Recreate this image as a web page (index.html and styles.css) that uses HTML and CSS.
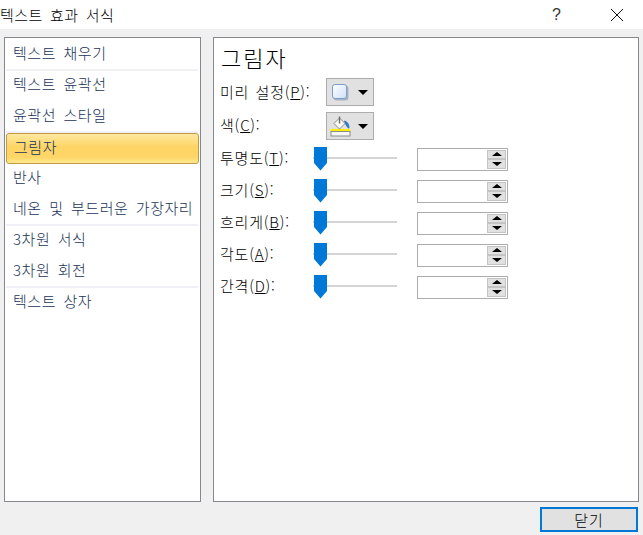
FILE: index.html
```html
<!DOCTYPE html>
<html lang="ko">
<head>
<meta charset="utf-8">
<title>텍스트 효과 서식</title>
<link rel="stylesheet" href="styles.css">
</head>
<body>
<div class="dialog">
  <header class="titlebar">
    <span class="title">텍스트 효과 서식</span>
    <span class="help">?</span>
    <svg class="close" width="14" height="14" viewBox="0 0 14 14"><path d="M1 1 13 13M13 1 1 13" stroke="#111" stroke-width="1" fill="none"/></svg>
  </header>
  <main class="main">
    <nav class="sidebar">
      <div class="item">텍스트 채우기</div>
      <div class="sep"></div>
      <div class="item">텍스트 윤곽선</div>
      <div class="item">윤곽선 스타일</div>
      <div class="sep faint"></div>
      <div class="item selected">그림자</div>
      <div class="item">반사</div>
      <div class="item">네온 및 부드러운 가장자리</div>
      <div class="sep"></div>
      <div class="item">3차원 서식</div>
      <div class="item">3차원 회전</div>
      <div class="sep"></div>
      <div class="item">텍스트 상자</div>
    </nav>
    <section class="panel">
      <h1 class="heading">그림자</h1>
      <div class="row btn-row">
        <span class="label">미리 설정(<u>P</u>):</span>
        <div class="dropdown">
          <svg width="20" height="20" viewBox="0 0 20 20">
            <defs>
              <linearGradient id="sq" x1="0" y1="0" x2="1" y2="1"><stop offset="0" stop-color="#ffffff"/><stop offset="1" stop-color="#cfe0f7"/></linearGradient>
            </defs>
            <rect x="3.500" y="3.500" width="15" height="15" rx="3" fill="#a9b3c4"/>
            <rect x="2.500" y="2.500" width="14" height="14" rx="2.500" fill="url(#sq)" stroke="#7a9dd0"/>
          </svg>
          <span class="caret"></span>
        </div>
      </div>
      <div class="row btn-row second">
        <span class="label">색(<u>C</u>):</span>
        <div class="dropdown">
          <svg width="22" height="22" viewBox="0 0 22 22">
            <path d="M4 8.500 9.500 3l5.500 5.500-5.500 5.500z" fill="#fbfaf2" stroke="#8a8a8a"/>
            <path d="M9.500 1.500v7" stroke="#6b6b6b" stroke-width="1.400"/>
            <path d="M14 5.500c3 .5 5.500 3 5.500 7.500l-1.500.5-3-4.500z" fill="#3a7ac2"/>
            <rect x="0.500" y="14" width="20" height="2" fill="#ffee00"/>
            <rect x="1" y="16.500" width="19" height="4.500" fill="#f6f6f6" stroke="#8c8c8c"/>
          </svg>
          <span class="caret"></span>
        </div>
      </div>
      <div class="row slider-row">
        <span class="label narrow">투명도(<u>T</u>):</span>
        <div class="slider"><svg class="thumb" width="14" height="24" viewBox="0 0 14 24"><path d="M1 0h13v16L7.500 23.500 1 16z" fill="#0078d7"/></svg></div>
        <div class="spinner"><div class="spins"><span class="spin"><i class="up"></i></span><span class="spin"><i class="down"></i></span></div></div>
      </div>
      <div class="row slider-row">
        <span class="label narrow">크기(<u>S</u>):</span>
        <div class="slider"><svg class="thumb" width="14" height="24" viewBox="0 0 14 24"><path d="M1 0h13v16L7.500 23.500 1 16z" fill="#0078d7"/></svg></div>
        <div class="spinner"><div class="spins"><span class="spin"><i class="up"></i></span><span class="spin"><i class="down"></i></span></div></div>
      </div>
      <div class="row slider-row">
        <span class="label narrow">흐리게(<u>B</u>):</span>
        <div class="slider"><svg class="thumb" width="14" height="24" viewBox="0 0 14 24"><path d="M1 0h13v16L7.500 23.500 1 16z" fill="#0078d7"/></svg></div>
        <div class="spinner"><div class="spins"><span class="spin"><i class="up"></i></span><span class="spin"><i class="down"></i></span></div></div>
      </div>
      <div class="row slider-row">
        <span class="label narrow">각도(<u>A</u>):</span>
        <div class="slider"><svg class="thumb" width="14" height="24" viewBox="0 0 14 24"><path d="M1 0h13v16L7.500 23.500 1 16z" fill="#0078d7"/></svg></div>
        <div class="spinner"><div class="spins"><span class="spin"><i class="up"></i></span><span class="spin"><i class="down"></i></span></div></div>
      </div>
      <div class="row slider-row">
        <span class="label narrow">간격(<u>D</u>):</span>
        <div class="slider"><svg class="thumb" width="14" height="24" viewBox="0 0 14 24"><path d="M1 0h13v16L7.500 23.500 1 16z" fill="#0078d7"/></svg></div>
        <div class="spinner"><div class="spins"><span class="spin"><i class="up"></i></span><span class="spin"><i class="down"></i></span></div></div>
      </div>
    </section>
  </main>
  <footer class="footer"><button class="close-btn">닫기</button></footer>
</div>
</body>
</html>
```
FILE: styles.css
```css
* { box-sizing: border-box; }
html, body { margin: 0; padding: 0; }
body {
  width: 643px;
  height: 535px;
  overflow: hidden;
  background: #f0f0f0;
  font-family: "Noto Sans CJK KR", "Liberation Sans", sans-serif;
  font-size: 15px;
  font-weight: 300;
  color: #000;
}
.dialog { display: flex; flex-direction: column; height: 535px; }
.titlebar {
  height: 29px;
  flex: none;
  background: #fff;
  display: flex;
  align-items: center;
  padding-left: 0;
}
.title { font-size: 15px; letter-spacing: 0.5px; word-spacing: 2.4px; line-height: 25px; flex: 1; }
.help { font-family: "Liberation Sans", sans-serif; font-size: 16px; font-weight: 400; width: 14px; margin-right: 44px; color: #333; }
.close { margin-right: 19px; }
.main {
  flex: none;
  height: 473px;
  padding: 8px 4px 0 4px;
  display: flex;
  gap: 12px;
}
.sidebar {
  width: 197px;
  height: 465px;
  background: #fff;
  border: 1px solid #87878f;
  padding: 1px 1px 1px 0;
  color: #1a3358;
}
.item {
  height: 31px;
  line-height: 28px;
  padding-left: 8px;
  letter-spacing: 0.55px;
  word-spacing: 2.7px;
  white-space: nowrap;
}
.sep { height: 2px; margin: -1px 1px; background: #f1f0f6; position: relative; }
.sep.faint { margin: -1px 1px -1px; }
.selected {
  height: 31px;
  margin: 1px 0 -1px 1px;
  padding-left: 7px;
  width: 193px;
  border: 1px solid #c29a43;
  border-radius: 3px;
  background: linear-gradient(#fde8a0 0, #fed565 45%, #fdd668 80%, #ffe88e 100%);
  line-height: 26px;
}
.panel {
  width: 426px;
  height: 465px;
  background: #fff;
  border: 1px solid #87878f;
  padding: 5px 0 0 6px;
}
.heading {
  margin: 0;
  font-size: 22px;
  font-weight: 300;
  line-height: 29px;
  height: 30px;
  letter-spacing: 2px;
  padding-left: 1px;
}
.row { display: flex; align-items: center; }
.label { letter-spacing: 0.8px; word-spacing: 1.4px; white-space: nowrap; line-height: 24px; }
.btn-row { height: 28px; margin-top: 5px; justify-content: flex-start; position: relative; }
.btn-row .label { width: 106px; flex: none; }
.btn-row.second { margin-top: 6px; }
.btn-row.second .label { margin-bottom: 2px; }
.dropdown {
  width: 48px;
  height: 28px;
  background: #e1e1e1;
  border: 1px solid #adadad;
  display: flex;
  align-items: center;
  padding-left: 3px;
  gap: 8px;
}
.btn-row.second .dropdown { gap: 6px; }
.caret {
  width: 0;
  height: 0;
  border-left: 5px solid transparent;
  border-right: 5px solid transparent;
  border-top: 5px solid #000;
}
.slider-row { height: 24px; margin-top: 8px; }
.btn-row.second + .slider-row { margin-top: 7px; }
.narrow { width: 93px; flex: none; margin-bottom: 2px; }
.slider { width: 84px; height: 24px; position: relative; flex: none; }
.slider::before {
  content: "";
  display: block;
  position: absolute;
  left: 0;
  right: 0;
  top: 10px;
  height: 2px;
  background: #d4d4d4;
}
.thumb { position: absolute; left: 0; top: 0; }
.spinner {
  margin-left: 20px;
  width: 91px;
  height: 23px;
  border: 1px solid #adadad;
  background: #fff;
  display: flex;
  justify-content: flex-end;
  padding: 1px;
  flex: none;
}
.spins { width: 19px; display: flex; flex-direction: column; }
.spin {
  flex: 1;
  background: #e1e1e1;
  border: 1px solid #c4c4c4;
  display: flex;
  align-items: center;
  justify-content: center;
}
.up, .down { display: block; width: 0; height: 0; border-left: 5px solid transparent; border-right: 5px solid transparent; }
.up { border-bottom: 4px solid #000; }
.down { border-top: 4px solid #000; }
.footer { flex: 1; display: flex; justify-content: flex-end; padding: 5px 5px 0 0; }
.close-btn {
  width: 98px;
  height: 25px;
  background: #e1e1e1;
  border: 2px solid #0078d7;
  font: inherit;
  letter-spacing: 1px;
  line-height: 17px;
  padding: 0;
  color: #000;
}
```
